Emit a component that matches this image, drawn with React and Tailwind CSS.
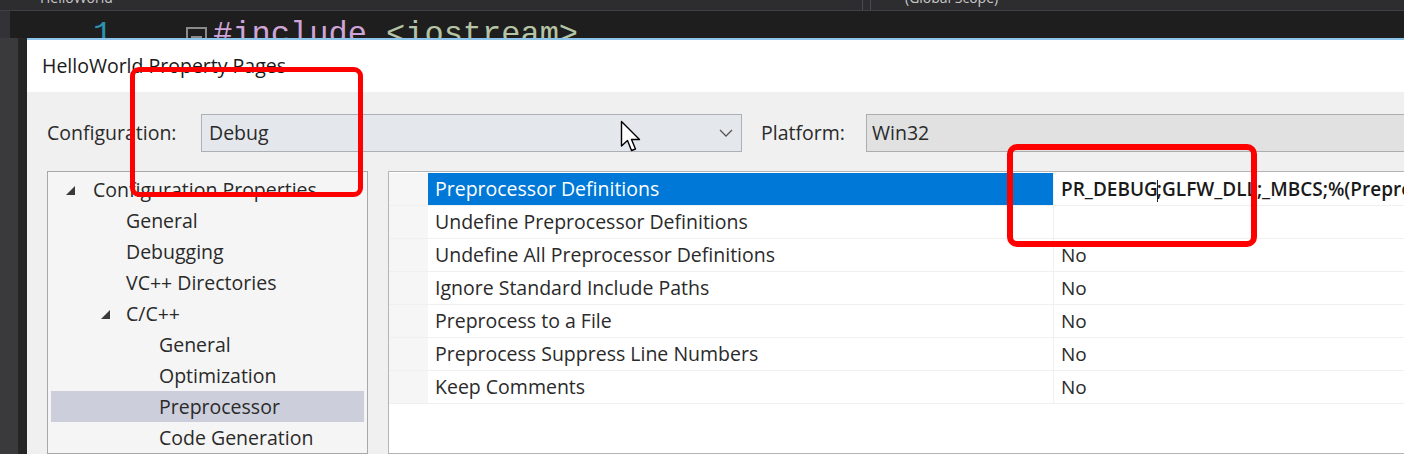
const ui = { fontFamily: '"Open Sans", "Noto Sans", sans-serif' };
const mono = { fontFamily: '"Liberation Mono", "DejaVu Sans Mono", monospace' };

const tree = [
  { label: 'Configuration Properties', indent: 45, arrow: 18 },
  { label: 'General', indent: 78 },
  { label: 'Debugging', indent: 78 },
  { label: 'VC++ Directories', indent: 78 },
  { label: 'C/C++', indent: 78, arrow: 53 },
  { label: 'General', indent: 111 },
  { label: 'Optimization', indent: 111 },
  { label: 'Preprocessor', indent: 111, selected: true },
  { label: 'Code Generation', indent: 111 },
];

const props = [
  { name: 'Preprocessor Definitions', value: 'defs', selected: true },
  { name: 'Undefine Preprocessor Definitions', value: '' },
  { name: 'Undefine All Preprocessor Definitions', value: 'No' },
  { name: 'Ignore Standard Include Paths', value: 'No' },
  { name: 'Preprocess to a File', value: 'No' },
  { name: 'Preprocess Suppress Line Numbers', value: 'No' },
  { name: 'Keep Comments', value: 'No' },
];

function Arrow() {
  return (
    <svg width="9" height="9" viewBox="0 0 9 9">
      <polygon points="9,0 9,9 0,9" fill="#3a3a3a" />
    </svg>
  );
}

function TreeRow({ item }) {
  return (
    <div
      className={`relative h-[31px] mx-[3px] flex items-center text-[19.5px] text-[#2a2a2a] ${item.selected ? 'bg-[#cccedb]' : ''}`}
    >
      {item.arrow !== undefined && (
        <span className="absolute top-[12px]" style={{ left: item.arrow - 3 }}>
          <Arrow />
        </span>
      )}
      <span style={{ paddingLeft: item.indent - 3 }} className="whitespace-nowrap">
        {item.label}
      </span>
    </div>
  );
}

function PropRow({ p }) {
  return (
    <div className="flex h-[33px] border-b border-[#f0f0f0]">
      <div className="w-[39px] shrink-0 bg-[#f6f6f6]" />
      <div
        className={`w-[625px] shrink-0 flex items-center pl-[7px] text-[19.5px] whitespace-nowrap ${p.selected ? 'bg-[#0078d7] text-white' : 'text-[#2a2a2a]'}`}
      >
        {p.name}
      </div>
      <div className="flex-1 flex items-center pl-[7px] border-l border-[#f0f0f0] text-[19px] text-[#2a2a2a] whitespace-nowrap overflow-hidden">
        {p.value === 'defs' ? (
          <span className="font-semibold text-[#1a1a1a]">
            PR_DEBUG<span className="inline-block w-px h-[22px] bg-[#222] align-middle -mx-[1px]" />;GLFW_DLL;_MBCS;%(PreprocessorDefinitions)
          </span>
        ) : (
          p.value
        )}
      </div>
    </div>
  );
}

export default function App() {
  return (
    <div className="relative w-[1404px] h-[454px] overflow-hidden bg-[#1e1e1e] flex flex-col" style={ui}>
      {/* editor tab strip */}
      <div className="h-[11px] shrink-0 bg-[#2d2d30] border-b border-[#3f3f46] flex overflow-hidden text-[14px] text-[#c8c8c8] leading-[14px]">
        <span className="ml-[40px] -mt-[9px] w-[822px]">HelloWorld</span>
        <div className="w-px bg-[#4a4a50]" />
        <div className="w-[7px]" />
        <div className="w-px bg-[#4a4a50]" />
        <span className="ml-[34px] -mt-[9px]">(Global Scope)</span>
      </div>

      {/* code line */}
      <div className="h-[27px] shrink-0 flex overflow-hidden">
        <div className="w-[10px] bg-[#333337]" />
        <div className="flex-1 pt-[8px] text-[32px] leading-[32px] whitespace-nowrap" style={mono}>
          <span className="inline-block ml-[83px] text-[#2b91af]">1</span>
          <span className="inline-block ml-[74px] align-top mt-[8px] w-[21px] h-[21px] border-2 border-[#8a8a8a] relative">
            <span className="absolute left-[3px] right-[3px] top-[7px] h-[2px] bg-[#8a8a8a]" />
          </span>
          <span className="text-[#cfa4d8] ml-[6px]">#include</span>
          <span className="text-[#b5c4a4]"> &lt;iostream&gt;</span>
        </div>
      </div>

      <div className="flex flex-1 min-h-0">
        <div className="w-[18px] shrink-0 bg-[#3a3a3c]" />
        <div className="w-[9px] shrink-0 bg-[#252526]" />

        {/* dialog */}
        <div className="flex-1 flex flex-col border-t-2 border-[#8cc4ec] bg-[#f0f0f0]">
          <div className="h-[52px] shrink-0 bg-white flex items-center pl-[15px] text-[19.5px] text-[#1a1a1a]">
            HelloWorld Property Pages
          </div>

          <div className="flex items-center pt-[22px] pl-[20px] text-[#2a2a2a]">
            <span className="w-[154px] shrink-0 text-[19.5px]">Configuration:</span>
            <div className="w-[541px] h-[38px] shrink-0 border border-[#abb0b6] bg-[#e4e8ec] flex items-center pl-[7px] pr-[8px] text-[19.5px]">
              <span className="flex-1">Debug</span>
              <svg width="14" height="8" viewBox="0 0 14 8">
                <polyline points="1,1 7,7 13,1" fill="none" stroke="#555" strokeWidth="1.3" />
              </svg>
            </div>
            <span className="w-[124px] shrink-0 pl-[19px] text-[19.5px]">Platform:</span>
            <div className="flex-1 h-[38px] border border-[#adadad] border-r-0 bg-[#e1e1e1] flex items-center pl-[5px] text-[19.5px]">
              Win32
            </div>
          </div>

          <div className="flex flex-1 min-h-0 pt-[19px] pl-[20px] gap-[20px]">
            <div className="w-[321px] shrink-0 border border-[#a8a8a8] bg-[#f5f5f5] pt-[2px]">
              {tree.map((t, i) => (
                <TreeRow key={i} item={t} />
              ))}
            </div>
            <div className="flex-1 border border-[#b4b4b4] border-r-0 bg-white pt-[1px]">
              {props.map((p, i) => (
                <PropRow key={i} p={p} />
              ))}
            </div>
          </div>
        </div>
      </div>

      {/* red annotation boxes */}
      <div className="absolute left-[130px] top-[67px] w-[233px] h-[130px] border-[5px] border-[#ff0000] rounded-[9px]" />
      <div className="absolute left-[1007px] top-[144px] w-[250px] h-[103px] border-[6px] border-[#ff0000] rounded-[10px]" />

      {/* mouse pointer */}
      <svg className="absolute left-[620px] top-[120px]" width="24" height="34" viewBox="0 0 24 34">
        <path
          d="M1.5 1.5 L1.5 26 L7.5 20.5 L11.5 30.5 L15.5 29 L11.5 19.5 L19.5 19.5 Z"
          fill="#ffffff"
          stroke="#000000"
          strokeWidth="1.4"
          strokeLinejoin="round"
        />
      </svg>
    </div>
  );
}
